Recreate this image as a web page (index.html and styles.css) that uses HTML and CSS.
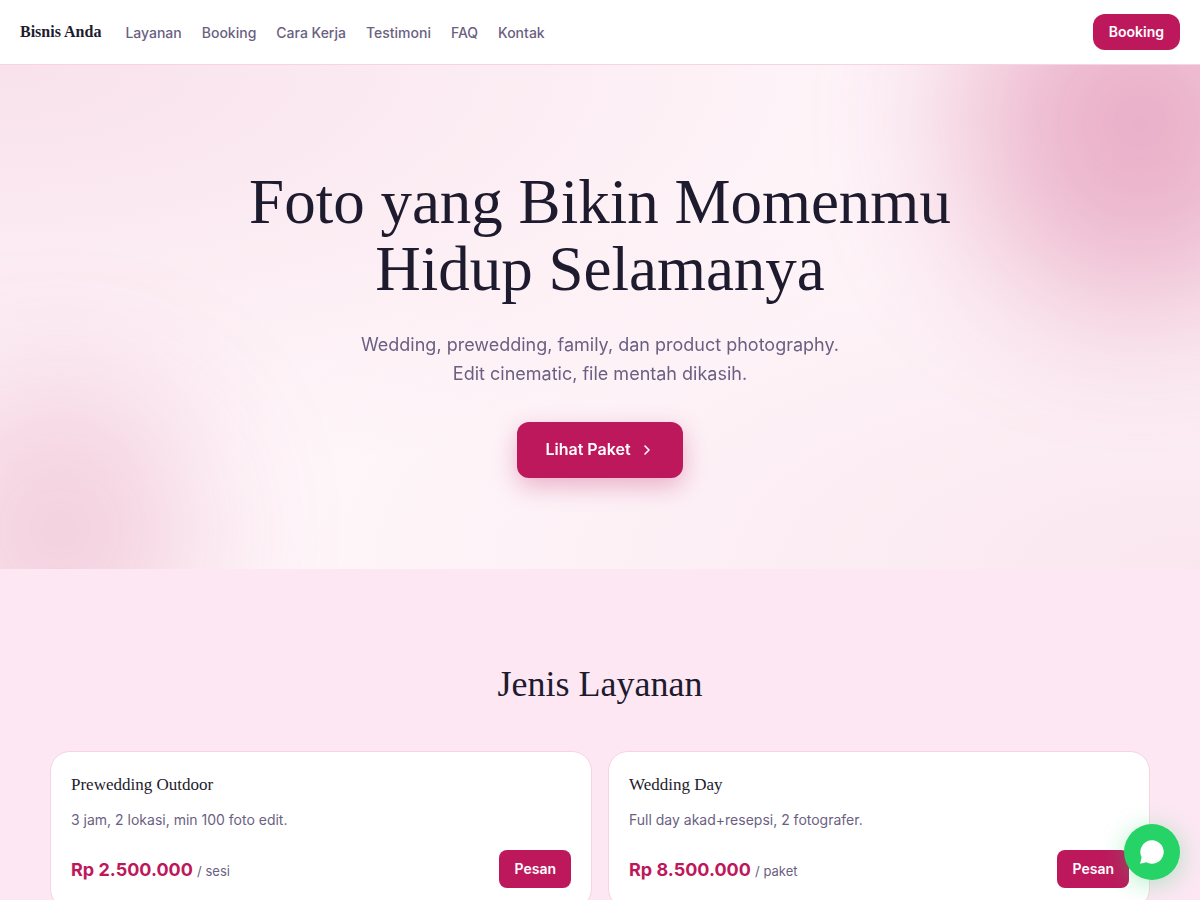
FILE: index.html
```html
<!DOCTYPE html>
<html lang="id">
<head>
<meta charset="utf-8">
<meta name="viewport" content="width=device-width, initial-scale=1">
<title>Bisnis Anda</title>
<link rel="stylesheet" href="styles.css">
</head>
<body>
<header class="site-header">
  <a class="brand" href="#top">Bisnis Anda</a>
  <nav class="nav" aria-label="Utama">
    <a href="#layanan">Layanan</a>
    <a href="#booking">Booking</a>
    <a href="#cara-kerja">Cara Kerja</a>
    <a href="#testimoni">Testimoni</a>
    <a href="#faq">FAQ</a>
    <a href="#kontak">Kontak</a>
  </nav>
  <a class="btn btn-header" href="#booking">Booking</a>
</header>
<main id="top">
  <section class="hero">
    <div class="hero-content">
      <h1>Foto yang Bikin Momenmu Hidup Selamanya</h1>
      <p>Wedding, prewedding, family, dan product photography.<br>Edit cinematic, file mentah dikasih.</p>
      <a class="btn btn-hero" href="#layanan">Lihat Paket
        <svg width="16" height="16" viewBox="0 0 16 16" fill="none" stroke="currentColor" stroke-width="1.600" stroke-linecap="round" stroke-linejoin="round" aria-hidden="true"><path d="M6 4l4 4-4 4"/></svg>
      </a>
    </div>
  </section>
  <section class="services" id="layanan">
    <h2>Jenis Layanan</h2>
    <div class="cards">
      <article class="card">
        <h3>Prewedding Outdoor</h3>
        <p class="desc">3 jam, 2 lokasi, min 100 foto edit.</p>
        <div class="card-foot">
          <p class="price">Rp 2.500.000 <span>/ sesi</span></p>
          <button class="btn btn-card" type="button">Pesan</button>
        </div>
      </article>
      <article class="card">
        <h3>Wedding Day</h3>
        <p class="desc">Full day akad+resepsi, 2 fotografer.</p>
        <div class="card-foot">
          <p class="price">Rp 8.500.000 <span>/ paket</span></p>
          <button class="btn btn-card" type="button">Pesan</button>
        </div>
      </article>
    </div>
  </section>
</main>
<a class="chat" href="#kontak" aria-label="Chat">
  <svg width="28" height="28" viewBox="0 0 24 24" fill="currentColor" aria-hidden="true"><path d="M12 2a10 10 0 0 0-8.900 14.600L1.800 22l5.300-1.300A10 10 0 1 0 12 2z"/></svg>
</a>
</body>
</html>
```
FILE: styles.css
```css
:root {
  --ink: #1e1b2e;
  --muted: #6b5f82;
  --accent: #be185d;
  --line: #f8d3e2;
  --serif: "Liberation Serif", serif;
}

* { box-sizing: border-box; }

body {
  margin: 0;
  font-family: Inter, sans-serif;
  font-size: 16px;
  line-height: 1.6;
  color: var(--ink);
  background: #fce7f3;
}

h1, h2, h3, p { margin: 0; }
h1, h2, h3 { font-family: var(--serif); font-weight: 400; }
a { color: inherit; text-decoration: none; }

.btn {
  display: inline-flex;
  align-items: center;
  justify-content: center;
  border: 0;
  font-family: inherit;
  font-weight: 600;
  color: #fff;
  background: var(--accent);
  cursor: pointer;
}

.site-header {
  position: sticky;
  top: 0;
  z-index: 5;
  display: flex;
  align-items: center;
  gap: 24px;
  min-height: 65px;
  padding: 0 20px;
  background: #fff;
  border-bottom: 1px solid var(--line);
}

.brand {
  font-family: var(--serif);
  font-weight: 700;
  white-space: nowrap;
}

.nav {
  display: flex;
  flex: 1;
  gap: 20px;
  padding-top: 2px;
  font-size: 14px;
  font-weight: 500;
  color: var(--muted);
}

.btn-header {
  height: 36px;
  padding: 0 16px;
  border-radius: 12px;
  font-size: 14px;
}

.hero {
  position: relative;
  isolation: isolate;
  overflow: hidden;
  padding: 104px 20px 91px;
  text-align: center;
  background:
    radial-gradient(ellipse at 0% 0%, rgba(190, 24, 93, 0.1), transparent 60%),
    radial-gradient(ellipse at 100% 100%, rgba(190, 24, 93, 0.08), transparent 60%),
    #fff8fb;
}

.hero::before,
.hero::after {
  content: "";
  position: absolute;
  z-index: -1;
  border-radius: 50%;
  background: var(--accent);
  filter: blur(80px);
}

.hero::before {
  top: -122px;
  right: -120px;
  width: 360px;
  height: 360px;
  opacity: 0.32;
}

.hero::after {
  bottom: -100px;
  left: -80px;
  width: 280px;
  height: 280px;
  opacity: 0.2;
}

.hero-content {
  position: relative;
  max-width: 760px;
  margin: 0 auto;
  will-change: transform;
}

.hero h1 {
  font-size: 63px;
  line-height: 67px;
}

.hero p {
  margin-top: 27px;
  font-size: 18px;
  line-height: 29px;
  color: var(--muted);
}

.btn-hero {
  gap: 8px;
  height: 56px;
  margin-top: 34px;
  padding: 0 28px;
  border-radius: 12px;
  box-shadow: 0 8px 24px rgba(190, 24, 93, 0.3);
}

.services { padding: 96px 20px; }

.services h2 {
  font-size: 36px;
  line-height: 38px;
  text-align: center;
}

.cards {
  display: grid;
  grid-template-columns: repeat(auto-fit, minmax(300px, 1fr));
  gap: 16px;
  max-width: 1100px;
  margin: 48px auto 0;
}

.card {
  padding: 20px;
  background: #fff;
  border: 1px solid var(--line);
  border-radius: 20px;
}

.card h3 {
  font-size: 17px;
  line-height: 26px;
}

.desc {
  margin-top: 10px;
  font-size: 14px;
  line-height: 24px;
  color: var(--muted);
}

.card-foot {
  display: flex;
  align-items: center;
  justify-content: space-between;
  gap: 16px;
  margin-top: 18px;
}

.price {
  padding-top: 2px;
  font-size: 18px;
  font-weight: 700;
  color: var(--accent);
}

.price span {
  font-size: 13px;
  font-weight: 400;
  color: var(--muted);
}

.btn-card {
  height: 38px;
  padding: 0 15px 2px;
  border-radius: 8px;
  font-size: 14px;
}

.chat {
  position: fixed;
  right: 20px;
  bottom: 20px;
  z-index: 10;
  display: grid;
  place-items: center;
  width: 56px;
  height: 56px;
  border-radius: 50%;
  color: #fff;
  background: #25d366;
  box-shadow: 0 4px 24px rgba(37, 211, 102, 0.35);
}
```
